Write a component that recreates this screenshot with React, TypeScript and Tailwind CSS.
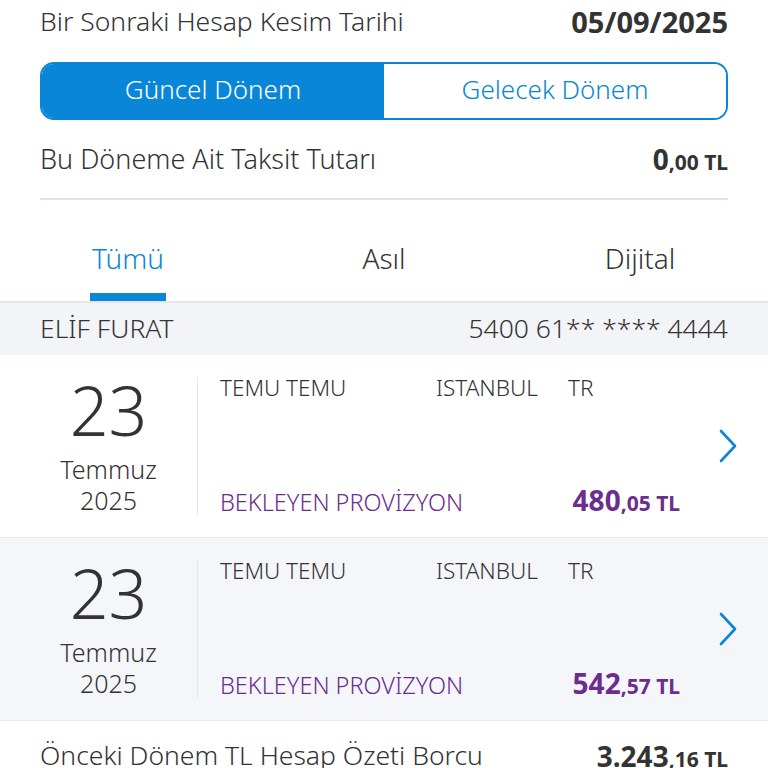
interface Txn {
  day: string;
  month: string;
  year: string;
  merchant: string;
  city: string;
  country: string;
  status: string;
  whole: string;
  cents: string;
}

const txns: Txn[] = [
  { day: '23', month: 'Temmuz', year: '2025', merchant: 'TEMU TEMU', city: 'ISTANBUL', country: 'TR', status: 'BEKLEYEN PROVİZYON', whole: '480', cents: ',05' },
  { day: '23', month: 'Temmuz', year: '2025', merchant: 'TEMU TEMU', city: 'ISTANBUL', country: 'TR', status: 'BEKLEYEN PROVİZYON', whole: '542', cents: ',57' },
];

function Amount({ whole, cents }: { whole: string; cents: string }) {
  return (
    <span className="font-bold whitespace-nowrap">
      <span className="text-[28px]">{whole}</span>
      <span className="text-[21px]">{cents} TL</span>
    </span>
  );
}

function Chevron() {
  return (
    <svg width="20" height="34" viewBox="0 0 20 34" fill="none" className="absolute right-[30px] top-1/2 -translate-y-1/2">
      <path d="M3 2 L17 17 L3 32" stroke="#0a86d8" strokeWidth="2.6" strokeLinecap="round" strokeLinejoin="round" />
    </svg>
  );
}

function TxnRow({ t, shaded }: { t: Txn; shaded: boolean }) {
  return (
    <div className={`flex h-[183px] border-b border-[#e6e8ec] ${shaded ? 'bg-[#f5f6fa]' : 'bg-white'}`}>
      <div className="w-[197px] pl-[20px] flex flex-col items-center justify-center text-[#333]">
        <div className="text-[68px] leading-none font-light">{t.day}</div>
        <div className="text-[25px] leading-[31px] mt-[10px] font-light">{t.month}</div>
        <div className="text-[25px] leading-[31px] font-light">{t.year}</div>
      </div>
      <div className="my-[22px] w-px bg-[#e3e5e9]" />
      <div className="flex-1 flex flex-col justify-between pl-[22px] pt-[22px] pb-[16px] pr-[88px] relative">
        <div className="flex text-[22.5px] text-[#333] leading-none font-light">
          <span className="w-[216px]">{t.merchant}</span>
          <span className="w-[132px]">{t.city}</span>
          <span>{t.country}</span>
        </div>
        <div className="flex justify-between items-baseline text-[#6b2d8e]">
          <span className="text-[23.5px] font-light">{t.status}</span>
          <Amount whole={t.whole} cents={t.cents} />
        </div>
        <Chevron />
      </div>
    </div>
  );
}

export default function App() {
  return (
    <div className="w-[768px] h-[768px] overflow-hidden bg-white text-[#333]" style={{ fontFamily: '"Noto Sans", "Open Sans", sans-serif' }}>
      <div className="px-10">
        <div className="flex justify-between items-center h-[44px]">
          <span className="text-[26.5px] font-light">Bir Sonraki Hesap Kesim Tarihi</span>
          <span className="text-[29px] font-bold">05/09/2025</span>
        </div>

        <div className="mt-[18px] flex h-[58px] rounded-[14px] border-2 border-[#0a86d8] overflow-hidden text-[26px] font-light">
          <button className="flex-1 bg-[#0a86d8] text-white pb-[4px]">Güncel Dönem</button>
          <button className="flex-1 bg-white text-[#0a86d8] pb-[4px]">Gelecek Dönem</button>
        </div>

        <div className="flex justify-between items-center h-[80px] border-b-2 border-[#dfe4ec]">
          <span className="text-[27px] font-light">Bu Döneme Ait Taksit Tutarı</span>
          <Amount whole="0" cents=",00" />
        </div>
      </div>

      <div className="flex h-[102px] border-b-2 border-[#e4e6ea] mt-px">
        {['Tümü', 'Asıl', 'Dijital'].map((tab, i) => (
          <div key={tab} className="flex-1 flex flex-col items-center justify-end">
            <span className={`text-[28px] font-light ${i === 0 ? 'text-[#0a86d8]' : 'text-[#333]'}`}>{tab}</span>
            <div className={`mt-[14px] h-[8px] w-[76px] ${i === 0 ? 'bg-[#0a86d8]' : 'bg-transparent'}`} />
          </div>
        ))}
      </div>

      <div className="flex justify-between items-center h-[52px] px-10 bg-[#f3f4f7] text-[26.5px] font-light">
        <span>ELİF FURAT</span>
        <span>5400 61** **** 4444</span>
      </div>

      {txns.map((t, i) => (
        <TxnRow key={i} t={t} shaded={i === 1} />
      ))}

      <div className="flex justify-between items-center h-[70px] px-10">
        <span className="text-[26.5px] font-light">Önceki Dönem TL Hesap Özeti Borcu</span>
        <Amount whole="3.243" cents=",16" />
      </div>
    </div>
  );
}
